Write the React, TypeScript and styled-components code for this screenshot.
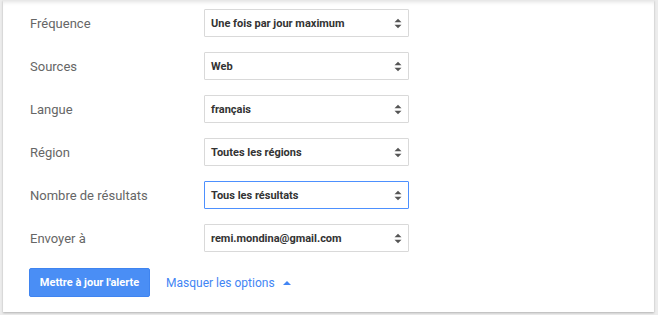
import React from 'react';
import styled, { createGlobalStyle } from 'styled-components';

const GlobalStyle = createGlobalStyle`
  html, body {
    margin: 0;
    padding: 0;
    background: #ececec;
  }
  body {
    font-family: Roboto, "Liberation Sans", Arial, sans-serif;
  }
`;

const Card = styled.div`
  margin: 0 4px 3px 3px;
  padding: 9px 27px 15px 26px;
  background: #fff;
  box-shadow: inset 0 5px 4px -3px rgba(0, 0, 0, 0.12), 0 1px 2px rgba(0, 0, 0, 0.25);
  display: flex;
  flex-direction: column;
  gap: 15px;
`;

const Row = styled.div`
  display: grid;
  grid-template-columns: 175px 205px;
  align-items: center;
`;

const Label = styled.div`
  font-size: 13px;
  color: #666;
  padding-left: 1px;
`;

interface ISelectBoxProps {
  focused?: boolean;
}

const SelectBox = styled.div<ISelectBoxProps>`
  height: 28px;
  box-sizing: border-box;
  border: 1px solid ${({ focused }) => (focused ? '#4d90fe' : '#d9d9d9')};
  border-radius: 1px;
  display: flex;
  align-items: center;
  justify-content: space-between;
  padding: 0 6px 0 6px;
  font-size: 11px;
  font-weight: 700;
  color: #333;
`;

const Footer = styled.div`
  display: flex;
  align-items: center;
  gap: 16px;
  margin-top: 1px;
`;

const PrimaryButton = styled.button`
  height: 29px;
  width: 121px;
  padding: 0;
  border: 1px solid #3f84f0;
  border-radius: 2px;
  background: #4a8ef5;
  color: #fff;
  font-family: inherit;
  font-size: 11px;
  font-weight: 700;
  cursor: pointer;
`;

const LinkButton = styled.a`
  display: flex;
  align-items: center;
  gap: 8px;
  font-size: 12px;
  color: #4285f4;
  cursor: pointer;
`;

const Arrows = () => (
  <svg width="8" height="11" viewBox="0 0 8 11">
    <path d="M0.5 4.3 L4 0.8 L7.5 4.3 Z" fill="#555" />
    <path d="M0.5 6.7 L4 10.2 L7.5 6.7 Z" fill="#555" />
  </svg>
);

const Caret = () => (
  <svg width="8" height="4" viewBox="0 0 8 4">
    <path d="M0 4 L4 0 L8 4 Z" fill="#4285f4" />
  </svg>
);

const fields = [
  { label: 'Fréquence', value: 'Une fois par jour maximum' },
  { label: 'Sources', value: 'Web' },
  { label: 'Langue', value: 'français' },
  { label: 'Région', value: 'Toutes les régions' },
  { label: 'Nombre de résultats', value: 'Tous les résultats', focused: true },
  { label: 'Envoyer à', value: 'remi.mondina@gmail.com' },
];

export default function App() {
  return (
    <>
      <GlobalStyle />
      <Card>
        {fields.map((f) => (
          <Row key={f.label}>
            <Label>{f.label}</Label>
            <SelectBox focused={f.focused}>
              <span>{f.value}</span>
              <Arrows />
            </SelectBox>
          </Row>
        ))}
        <Footer>
          <PrimaryButton>Mettre à jour l'alerte</PrimaryButton>
          <LinkButton>
            Masquer les options
            <Caret />
          </LinkButton>
        </Footer>
      </Card>
    </>
  );
}
